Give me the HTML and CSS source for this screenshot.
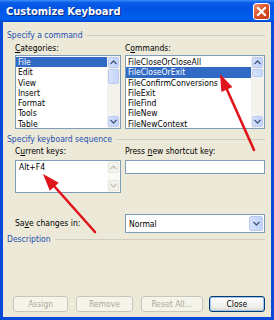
FILE: index.html
```html
<!DOCTYPE html>
<html lang="en">
<head>
    <meta charset="UTF-8">
    <title>Customize Keyboard</title>
    <link rel="stylesheet" href="styles.css">
</head>
<body>
    <div class="window">
        <div class="titlebar">
            <span class="title">Customize Keyboard</span>
            <span class="close-btn">
                <svg width="11" height="11" viewBox="0 0 11 11"><path d="M2 2 L9 9 M9 2 L2 9" stroke="#fff" stroke-width="2.2" stroke-linecap="square"/></svg>
            </span>
        </div>

        <div class="content">
            <div class="group-title"><span>Specify a command</span></div>
            <div class="cols">
                <div>
                    <div class="label"><u>C</u>ategories:</div>
                    <div class="listbox">
                        <ul class="items">
                            <li class="selected">File</li>
                            <li>Edit</li>
                            <li>View</li>
                            <li>Insert</li>
                            <li>Format</li>
                            <li>Tools</li>
                            <li>Table</li>
                        </ul>
                        <div class="vscroll">
                            <span class="sbtn"><svg width="7" height="5" viewBox="0 0 7 5"><path d="M0.5 4 L3.5 1 L6.5 4" fill="none" stroke="#4D6185" stroke-width="1.5"/></svg></span>
                            <span class="thumb thumb-long"></span>
                            <span class="track"></span>
                            <span class="sbtn"><svg width="7" height="5" viewBox="0 0 7 5"><path d="M0.5 1 L3.5 4 L6.5 1" fill="none" stroke="#4D6185" stroke-width="1.5"/></svg></span>
                        </div>
                    </div>
                </div>
                <div>
                    <div class="label">C<u>o</u>mmands:</div>
                    <div class="listbox">
                        <ul class="items">
                            <li>FileCloseOrCloseAll</li>
                            <li class="selected">FileCloseOrExit</li>
                            <li>FileConfirmConversions</li>
                            <li>FileExit</li>
                            <li>FileFind</li>
                            <li>FileNew</li>
                            <li>FileNewContext</li>
                        </ul>
                        <div class="vscroll">
                            <span class="sbtn"><svg width="7" height="5" viewBox="0 0 7 5"><path d="M0.5 4 L3.5 1 L6.5 4" fill="none" stroke="#4D6185" stroke-width="1.5"/></svg></span>
                            <span class="thumb thumb-short"></span>
                            <span class="track"></span>
                            <span class="sbtn"><svg width="7" height="5" viewBox="0 0 7 5"><path d="M0.5 1 L3.5 4 L6.5 1" fill="none" stroke="#4D6185" stroke-width="1.5"/></svg></span>
                        </div>
                    </div>
                </div>
            </div>

            <div class="group-title second"><span>Specify keyboard sequence</span></div>
            <div class="cols">
                <div>
                    <div class="label label-keys">C<u>u</u>rrent keys:</div>
                    <div class="keysbox">
                        <div class="keys-text">Alt+F4</div>
                        <div class="vscroll disabled">
                            <span class="sbtn"><svg width="7" height="5" viewBox="0 0 7 5"><path d="M0.5 4 L3.5 1 L6.5 4" fill="none" stroke="#C9C7BA" stroke-width="1.5"/></svg></span>
                            <span class="track"></span>
                            <span class="sbtn"><svg width="7" height="5" viewBox="0 0 7 5"><path d="M0.5 1 L3.5 4 L6.5 1" fill="none" stroke="#C9C7BA" stroke-width="1.5"/></svg></span>
                        </div>
                    </div>
                </div>
                <div>
                    <div class="label label-keys">Press <u>n</u>ew shortcut key:</div>
                    <div class="textbox"></div>
                </div>
            </div>

            <div class="cols save-row">
                <div class="label save-label">Sa<u>v</u>e changes in:</div>
                <div class="combo">
                    <span class="combo-text">Normal</span>
                    <span class="combo-btn"><svg width="7" height="5" viewBox="0 0 7 5"><path d="M0.5 1 L3.5 4 L6.5 1" fill="none" stroke="#4D6185" stroke-width="1.5"/></svg></span>
                </div>
            </div>

            <div class="group-title third"><span>Description</span></div>

            <div class="buttons">
                <button class="btn btn-assign" disabled>Assign</button>
                <button class="btn btn-remove" disabled>Remove</button>
                <button class="btn btn-reset" disabled>Reset All...</button>
                <button class="btn btn-close">Close</button>
            </div>
        </div>
    </div>

    <!-- red annotation arrows -->
    <svg class="arrows" width="274" height="320" viewBox="0 0 274 320">
        <line x1="254" y1="150" x2="226.5" y2="88.5" stroke="#E0141B" stroke-width="2.6" stroke-linecap="round"/>
        <polygon points="220,74 232.4,87.1 221.4,91.9" fill="#E0141B"/>
        <line x1="95" y1="232" x2="54.5" y2="186.5" stroke="#E0141B" stroke-width="2.6" stroke-linecap="round"/>
        <polygon points="43,174 58.8,182.7 49.8,190.7" fill="#E0141B"/>
    </svg>
</body>
</html>
```

FILE: styles.css
```css
body {
    margin: 0;
    position: relative;
    font-family: "DejaVu Sans Condensed", "DejaVu Sans", sans-serif;
    font-size: 8.5px;
    color: #000;
}
.window {
    width: 274px;
    height: 320px;
    box-sizing: border-box;
    background-color: #ECE9D8;
    border: 3px solid #0B49D8;
    border-top: 0;
    display: flex;
    flex-direction: column;
}
.titlebar {
    height: 22px;
    margin: 0 -3px;
    padding: 0 4px 0 6px;
    display: flex;
    align-items: center;
    justify-content: space-between;
    background: linear-gradient(#3D8EF8 0%, #0A5DE8 12%, #0054E3 45%, #0061F0 85%, #0046D0 100%);
}
.title {
    font-family: "DejaVu Sans Condensed", "DejaVu Sans", sans-serif;
    font-weight: bold;
    font-size: 11px;
    color: #fff;
    text-shadow: 1px 1px 0 #0A2A80;
}
.close-btn {
    width: 17px;
    height: 17px;
    box-sizing: border-box;
    border: 1px solid #fff;
    border-radius: 3px;
    background: linear-gradient(135deg, #EC9272, #DA4E24 50%, #C23C15);
    display: flex;
    align-items: center;
    justify-content: center;
}
.content {
    flex: 1;
    padding: 8px 6px 5px 4px;
    display: flex;
    flex-direction: column;
}
.group-title {
    height: 11px;
    line-height: 11px;
    display: flex;
    align-items: center;
    gap: 4px;
    color: #1B4FB0;
}
.group-title::after {
    content: "";
    flex: 1;
    border-top: 1px solid #D0CEBF;
}
.group-title.second {
    margin-top: 5px;
}
.group-title.third {
    margin-top: 1px;
}
.cols {
    display: grid;
    grid-template-columns: 106px 140px;
    column-gap: 4px;
    margin-left: 8px;
}
.label {
    height: 11px;
    line-height: 11px;
    margin-top: 2px;
    margin-bottom: 1px;
}
.label-keys {
    margin-top: 1px;
    margin-bottom: 3px;
}
.listbox {
    height: 74px;
    box-sizing: border-box;
    border: 1px solid #7F9DB9;
    background-color: #fff;
    display: flex;
}
.items {
    list-style: none;
    margin: 0;
    padding: 1px 0 0 0;
    flex: 1;
    overflow: hidden;
}
.items li {
    height: 10.3px;
    line-height: 10.3px;
    padding-left: 2px;
    white-space: nowrap;
}
.items li.selected {
    background-color: #316AC5;
    color: #fff;
}
.vscroll {
    width: 13px;
    display: flex;
    flex-direction: column;
    background-color: #F3F2EC;
    padding: 1px 0;
    box-sizing: border-box;
}
.sbtn {
    height: 11px;
    margin: 0 1px;
    border: 1px solid #B9CBF3;
    border-radius: 2px;
    background: linear-gradient(90deg, #D6E1FC, #C1D3FB);
    display: flex;
    align-items: center;
    justify-content: center;
    box-sizing: border-box;
}
.thumb {
    margin: 1px 1px 0;
    border: 1px solid #B9CBF3;
    border-radius: 2px;
    background: linear-gradient(90deg, #D6E1FC, #C6D6FC);
}
.thumb-long {
    height: 13px;
}
.thumb-short {
    height: 6px;
}
.track {
    flex: 1;
}
.vscroll.disabled {
    background-color: #FAFAF7;
}
.vscroll.disabled .sbtn {
    border-color: #E8E6DC;
    background: #F4F3EE;
}
.keysbox {
    height: 33px;
    box-sizing: border-box;
    border: 1px solid #7F9DB9;
    background-color: #fff;
    display: flex;
}
.keys-text {
    flex: 1;
    padding: 1px 0 0 3px;
    line-height: 10px;
}
.textbox {
    height: 14px;
    box-sizing: border-box;
    border: 1px solid #7F9DB9;
    background-color: #fff;
}
.save-row {
    margin-top: 21px;
    align-items: center;
}
.save-label {
    margin: 0;
}
.combo {
    height: 19px;
    box-sizing: border-box;
    border: 1px solid #7F9DB9;
    background-color: #fff;
    display: flex;
    align-items: center;
    padding: 1px;
}
.combo-text {
    flex: 1;
    padding-left: 2px;
}
.combo-btn {
    width: 14px;
    height: 15px;
    box-sizing: border-box;
    border: 1px solid #B9CBF3;
    border-radius: 2px;
    background: linear-gradient(90deg, #D6E1FC, #C1D3FB);
    display: flex;
    align-items: center;
    justify-content: center;
}
.buttons {
    margin-top: auto;
    display: flex;
    padding-left: 6px;
}
.btn {
    height: 16px;
    box-sizing: border-box;
    font-family: inherit;
    font-size: 8.5px;
    padding: 0;
    border-radius: 3px;
    border: 1px solid #C9C7BA;
    background-color: #F5F4EA;
    color: #ACA899;
}
.btn-assign {
    width: 56px;
}
.btn-remove {
    width: 57px;
    margin-left: 8px;
}
.btn-reset {
    width: 63px;
    margin-left: 8px;
}
.btn-close {
    width: 57px;
    margin-left: 6px;
    color: #000;
    border-color: #003C74;
    background: linear-gradient(#FFFFFF, #F0F0EA 70%, #D8D6CB);
    box-shadow: inset 0 0 0 1px #A6C4F0;
}
.arrows {
    position: absolute;
    top: 0;
    left: 0;
}
```
